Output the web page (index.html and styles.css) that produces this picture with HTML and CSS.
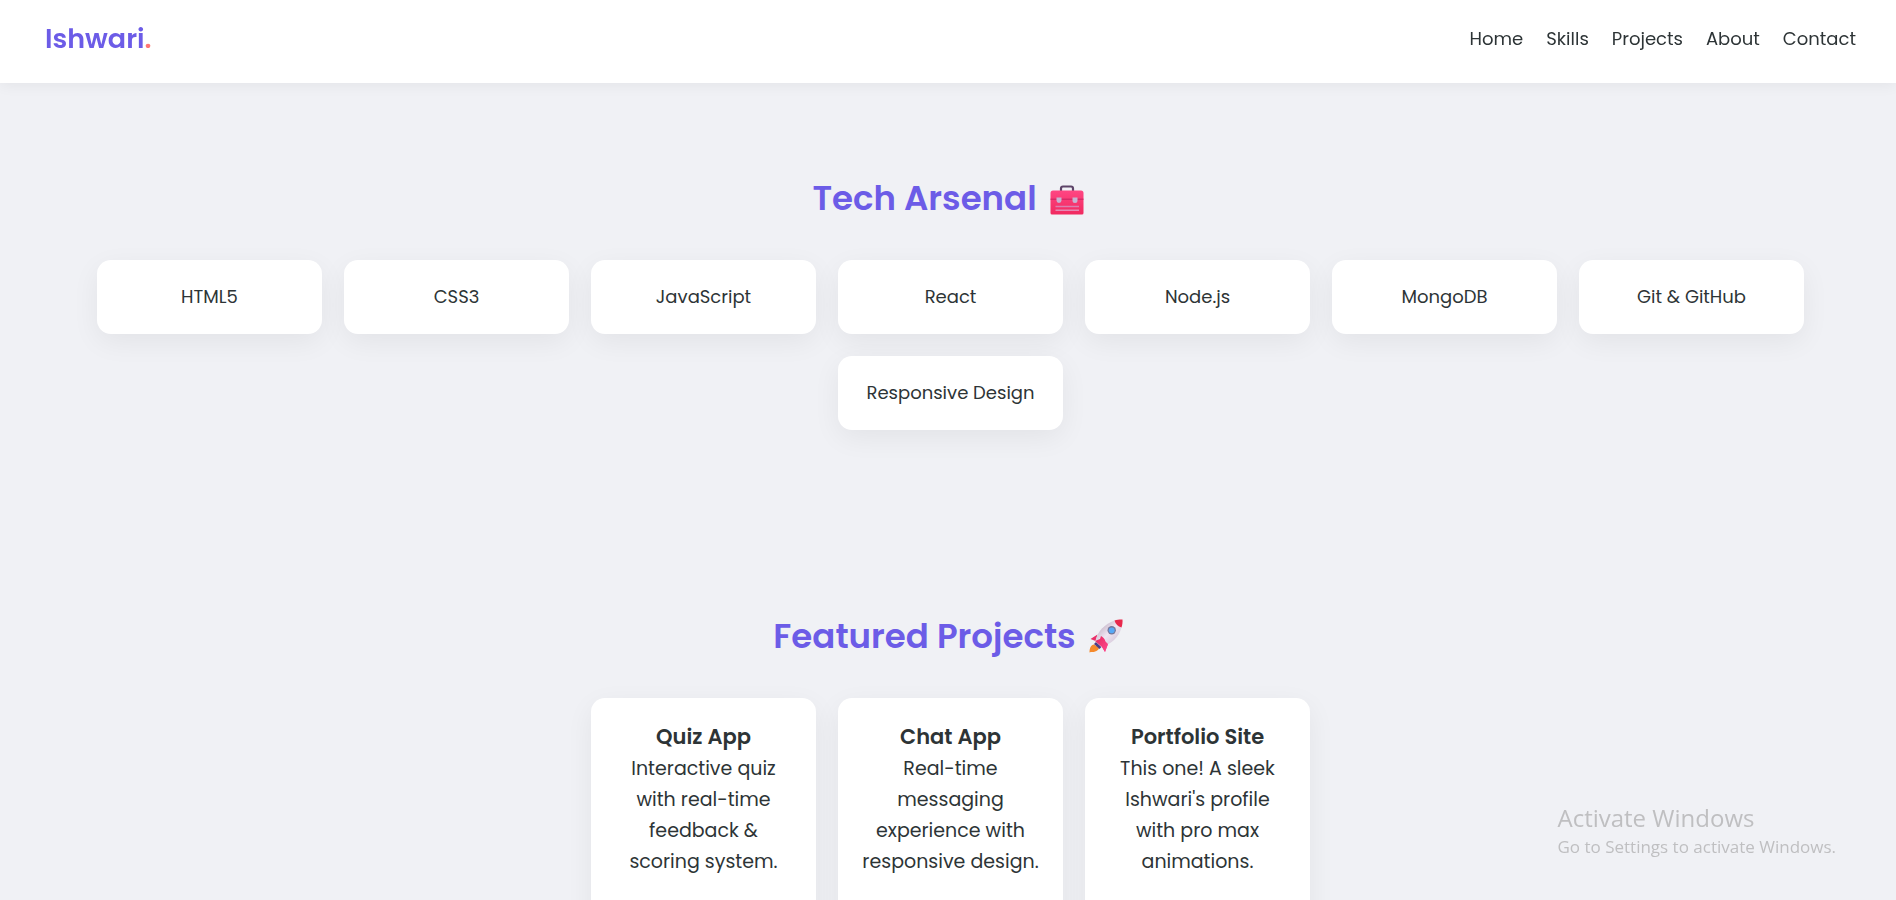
FILE: index.html
```html
<!DOCTYPE html>
<html lang="en">
<head>
<meta charset="utf-8">
<title>Ishwari</title>
<link rel="stylesheet" href="styles.css">
</head>
<body>
<header class="header">
  <a class="logo" href="#home">Ishwari<span class="logo-dot">.</span></a>
  <nav class="nav">
    <a href="#home">Home</a>
    <a href="#skills">Skills</a>
    <a href="#projects">Projects</a>
    <a href="#about">About</a>
    <a href="#contact">Contact</a>
  </nav>
</header>
<main>
  <section class="section" id="skills">
    <h2 class="title">Tech Arsenal
      <svg class="emoji" viewBox="0 -2 34 34" role="img" aria-label="Toolbox">
        <defs>
          <linearGradient id="box" x1="0" y1="0" x2="0" y2="1"><stop offset="0" stop-color="#ff4683"/><stop offset="1" stop-color="#f02a60"/></linearGradient>
        </defs>
        <path d="M11 8V5.500a2 2 0 0 1 2-2h8a2 2 0 0 1 2 2V8" fill="none" stroke="#5d4468" stroke-width="2.200"/>
        <path d="M3 7.500h28a2.500 2.500 0 0 1 2.500 2.500v20a1.500 1.500 0 0 1-1.500 1.500H2A1.500 1.500 0 0 1 .5 30V10A2.500 2.500 0 0 1 3 7.500z" fill="url(#box)"/>
        <path d="M.5 16.200h33" stroke="#c92461" stroke-width="1"/>
        <path d="M6.500 14.500h5v3a2.500 2.500 0 0 1-5 0zM22.500 14.500h5v3a2.500 2.500 0 0 1-5 0z" fill="#c5b3d2"/>
        <path d="M5.500 23.500h23.500" stroke="#dc7fb0" stroke-width="1.500"/>
        <path d="M5.500 27.200h23.500" stroke="#e0a0c8" stroke-width="1.200"/>
      </svg>
    </h2>
    <ul class="cards">
      <li class="card skill">HTML5</li>
      <li class="card skill">CSS3</li>
      <li class="card skill">JavaScript</li>
      <li class="card skill">React</li>
      <li class="card skill">Node.js</li>
      <li class="card skill">MongoDB</li>
      <li class="card skill">Git &amp; GitHub</li>
      <li class="card skill">Responsive Design</li>
    </ul>
  </section>
  <section class="section" id="projects">
    <h2 class="title">Featured Projects
      <svg class="emoji" viewBox="0 0 34 34" role="img" aria-label="Rocket">
        <defs>
          <linearGradient id="hull" x1="0" y1="0" x2="1" y2="1"><stop offset=".25" stop-color="#cdbfd0"/><stop offset=".5" stop-color="#f0e6f2"/><stop offset=".8" stop-color="#d5c8da"/></linearGradient>
          <linearGradient id="fin" x1="0" y1="0" x2="1" y2="1"><stop offset="0" stop-color="#e5285f"/><stop offset="1" stop-color="#ff4a8f"/></linearGradient>
        </defs>
        <path d="M5 25.500C2 26 .5 29 .5 33.500c2-1 3.500-.2 5-.7 3-.8 4.500-2.300 4.500-4.300z" fill="#f58a2c"/>
        <path d="M5 25l5.500 5 2-2-5.500-5z" fill="#4c3f86"/>
        <path d="M8.500 15.500L1.500 20l5 2zM19 25l-3 8-3-5z" fill="url(#fin)"/>
        <path d="M25.500 1.500C16 5 8.500 12 6.500 22L12 27.500C22 26 30 18 32.500 8.500z" fill="url(#hull)"/>
        <path d="M25.500 1.500C28 .6 31 .4 33.500.5 33.700 3 33.400 6 32.500 8.500c-3.500-1-6-3.500-7-7z" fill="#e8284c"/>
        <path d="M12 17c2 1 4 3 4.500 5.500l2.500 2.500-3 8-3-5-7-6 5-2z" fill="url(#fin)"/>
        <circle cx="22.700" cy="11.300" r="4.200" fill="#75789b"/>
        <circle cx="22.700" cy="11.300" r="2.900" fill="#58a9f7"/>
      </svg>
    </h2>
    <div class="cards">
      <article class="card project">
        <h3>Quiz App</h3>
        <p>Interactive quiz<br>with real-time<br>feedback &amp;<br>scoring system.</p>
      </article>
      <article class="card project">
        <h3>Chat App</h3>
        <p>Real-time<br>messaging<br>experience with<br>responsive design.</p>
      </article>
      <article class="card project">
        <h3>Portfolio Site</h3>
        <p>This one! A sleek<br>Ishwari's profile<br>with pro max<br>animations.</p>
      </article>
    </div>
  </section>
</main>
<aside class="watermark">
  <p class="watermark-title">Activate Windows</p>
  <p class="watermark-text">Go to Settings to activate Windows.</p>
</aside>
</body>
</html>
```
FILE: styles.css
```css
* {
  box-sizing: border-box;
  margin: 0;
  padding: 0;
}

html,
body {
  height: 100%;
  overflow: hidden;
}

body {
  background: #f0f1f5;
  color: #2d3436;
  font-family: Poppins, Inter, sans-serif;
  font-size: 18px;
}

.header {
  position: sticky;
  top: 0;
  z-index: 1;
  display: flex;
  justify-content: space-between;
  align-items: center;
  padding: 19px 40px 24px 45px;
  background: #fff;
  box-shadow: 0 2px 14px rgba(0, 0, 0, 0.06);
}

.logo {
  color: #6c5ce7;
  font-size: 27px;
  font-weight: 600;
  line-height: 40px;
  text-decoration: none;
}

.logo-dot {
  color: #ff7675;
}

.nav {
  display: flex;
  gap: 23px;
}

.nav a {
  color: inherit;
  line-height: 30px;
  text-decoration: none;
}

.section {
  padding: 88px 40px 91px;
}

.title {
  display: flex;
  justify-content: center;
  align-items: center;
  gap: 13px;
  margin-bottom: 35px;
  color: #6c5ce7;
  font-size: 34px;
  font-weight: 600;
  line-height: 54px;
}

.emoji {
  width: 34px;
  height: 34px;
}

.cards {
  display: flex;
  flex-wrap: wrap;
  justify-content: center;
  gap: 22px;
  padding-left: 5px;
  list-style: none;
}

.card {
  width: 225px;
  border-radius: 14px;
  background: #fff;
  box-shadow: 0 8px 28px rgba(0, 0, 0, 0.06);
  text-align: center;
}

.skill {
  padding: 22px;
  line-height: 30px;
  white-space: nowrap;
}

.project {
  padding: 23px 22px 90px;
}

.project h3 {
  font-size: 21px;
  font-weight: 600;
  line-height: 32px;
}

.project p {
  font-size: 19px;
  line-height: 31px;
  white-space: nowrap;
}

.watermark {
  position: fixed;
  right: 60px;
  bottom: 40px;
  z-index: 2;
  color: #bfbfc1;
  font-family: "Segoe UI", "Open Sans", sans-serif;
}

.watermark-title {
  font-size: 24px;
  line-height: 33px;
}

.watermark-text {
  font-size: 17px;
  line-height: 26px;
}
```
